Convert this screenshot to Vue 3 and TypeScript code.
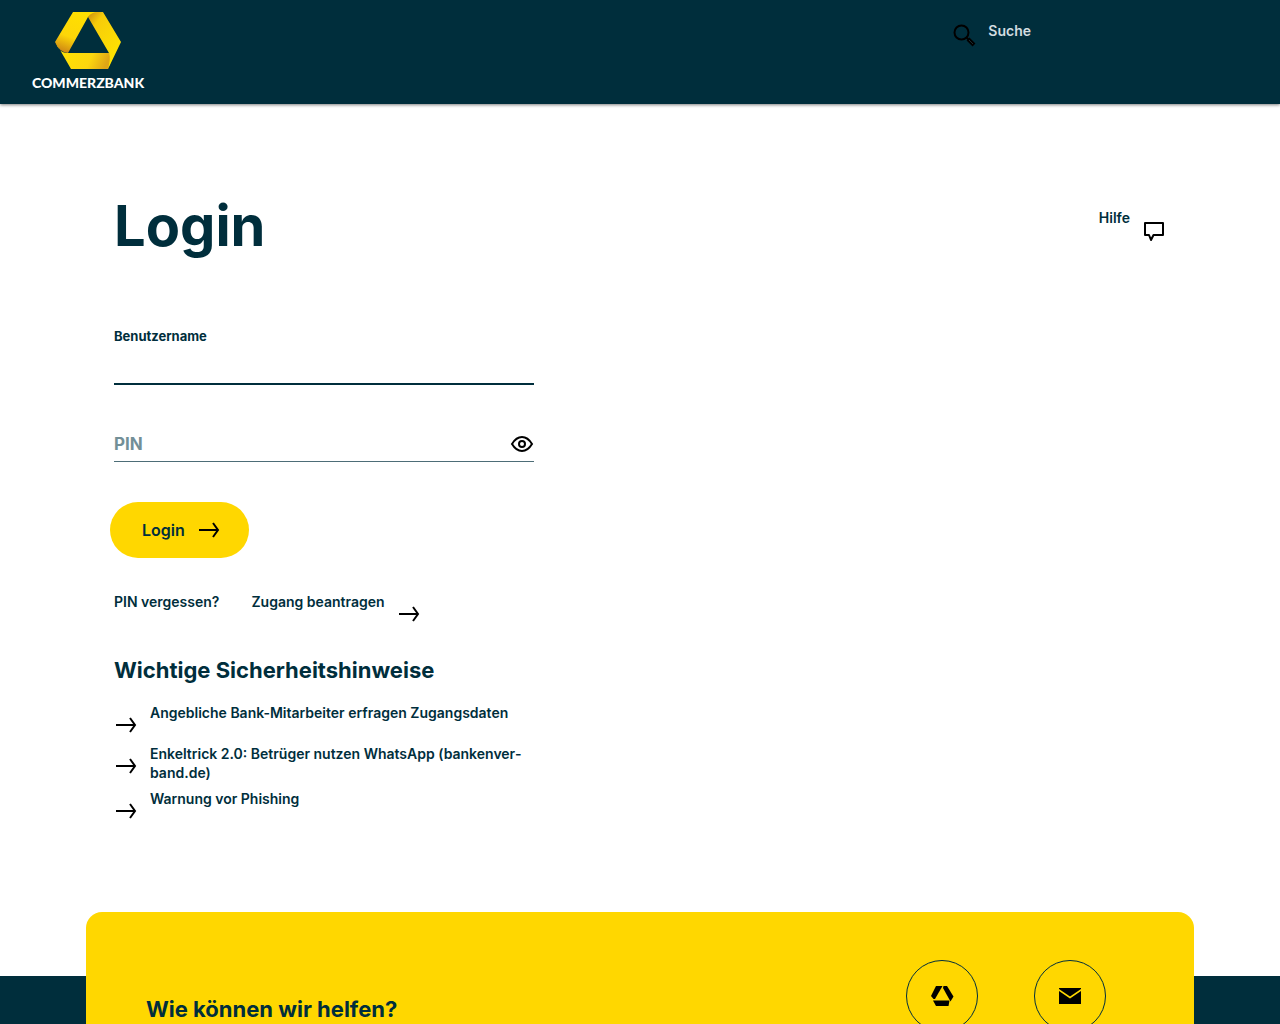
<script setup lang="ts">
import { ref } from 'vue'

const username = ref<string>('')
const pin = ref<string>('')
const pinVisible = ref<boolean>(false)

const hints: string[] = [
  'Angebliche Bank-Mitarbeiter erfragen Zugangsdaten',
  'Enkeltrick 2.0: Betrüger nutzen WhatsApp (bankenver\u00adband.de)',
  'Warnung vor Phishing',
]
</script>

<template>
  <div class="page">
    <header class="header">
      <a class="brand" href="#">
        <svg class="brand-mark" viewBox="0 0 66 57" aria-hidden="true">
          <defs>
            <linearGradient id="band-left" x1="0.7" y1="0" x2="0.3" y2="1">
              <stop offset="0" stop-color="#ffe000" />
              <stop offset="0.65" stop-color="#fdd608" />
              <stop offset="1" stop-color="#d08a14" />
            </linearGradient>
            <linearGradient id="band-right" x1="0" y1="0" x2="0.7" y2="1">
              <stop offset="0" stop-color="#c98a10" />
              <stop offset="0.25" stop-color="#f7cc0a" />
              <stop offset="1" stop-color="#ffe600" />
            </linearGradient>
            <linearGradient id="band-bottom" x1="0" y1="0" x2="1" y2="0.2">
              <stop offset="0" stop-color="#ffe600" />
              <stop offset="0.7" stop-color="#fcd60e" />
              <stop offset="1" stop-color="#e0a616" />
            </linearGradient>
          </defs>
          <path d="M1 31Q4 41 13 41H54L58 44L53 57H16z" fill="url(#band-bottom)" />
          <path d="M38 0H48L66 30L53 57Q56 46 54 41L33 5Q34 0 40 0z" fill="url(#band-right)" />
          <path d="M18 0H44Q36 0 33 5L13 41Q4 40 0 30z" fill="url(#band-left)" />
        </svg>
        <span class="brand-name">COMMERZBANK</span>
      </a>
      <a class="search" href="#">
        <svg class="icon" viewBox="0 0 24 24" aria-hidden="true">
          <circle cx="9.500" cy="9.500" r="7" fill="none" stroke="#000" stroke-width="2" />
          <path d="M14 14l4 4" stroke="#000" stroke-width="2" />
          <path d="M16 16l6 6" stroke="#000" stroke-width="4" />
          <path d="M17 17l4 4" stroke="#1c2b30" stroke-width="1" />
        </svg>
        <span>Suche</span>
      </a>
    </header>

    <main class="main">
      <div class="title-row">
        <h1>Login</h1>
        <a class="help" href="#">
          <span>Hilfe</span>
          <svg class="icon" viewBox="0 0 24 24" fill="none" stroke="#000" stroke-width="2" stroke-linejoin="round" aria-hidden="true">
            <path d="M3 4H21V16H11.500L9 21L7 16H3z" />
          </svg>
        </a>
      </div>

      <div class="column">
        <form @submit.prevent>
          <div class="field field-active">
            <label for="username">Benutzername</label>
            <input id="username" v-model="username" type="text" autocomplete="username" />
          </div>
          <div class="field field-pin">
            <input
              id="pin"
              v-model="pin"
              :type="pinVisible ? 'text' : 'password'"
              placeholder="PIN"
              aria-label="PIN"
              autocomplete="current-password"
            />
            <button class="eye" type="button" aria-label="PIN anzeigen" @click="pinVisible = !pinVisible">
              <svg class="icon" viewBox="0 0 24 24" fill="none" stroke="#000" stroke-width="2" aria-hidden="true">
                <path d="M2 12C5 7 8 5 12 5S19 7 22 12C19 17 16 19 12 19S5 17 2 12z" />
                <circle cx="12" cy="12" r="3" />
              </svg>
            </button>
          </div>
          <button class="submit" type="submit">
            <span>Login</span>
            <svg class="icon" viewBox="0 0 24 24" fill="none" stroke="#000" stroke-width="2" aria-hidden="true">
              <path d="M2 12H21M16 5L21 12L16 19" />
            </svg>
          </button>
        </form>

        <nav class="links">
          <a href="#">PIN vergessen?</a>
          <a class="apply" href="#">
            <span>Zugang beantragen</span>
            <svg class="icon" viewBox="0 0 24 24" fill="none" stroke="#000" stroke-width="2" aria-hidden="true">
              <path d="M2 12H21M16 5L21 12L16 19" />
            </svg>
          </a>
        </nav>

        <h2>Wichtige Sicherheitshinweise</h2>
        <ul class="hints">
          <li v-for="hint in hints" :key="hint">
            <a href="#">
              <svg class="icon" viewBox="0 0 24 24" fill="none" stroke="#000" stroke-width="2" aria-hidden="true">
                <path d="M2 12H21M16 5L21 12L16 19" />
              </svg>
              <span>{{ hint }}</span>
            </a>
          </li>
        </ul>
      </div>
    </main>

    <footer class="footer">
      <section class="contact">
        <h2>Wie können wir helfen?</h2>
        <div class="contact-actions">
          <a href="#" aria-label="Filiale">
            <svg class="icon" viewBox="0 0 24 24" aria-hidden="true">
              <path d="M6 2H12.500L5 15L3.500 15L1 12z" />
              <path d="M13.500 2H17L23.500 12.500L20.500 17.500L13 4z" />
              <path d="M3 16.500H19.500L18.500 22H6z" />
            </svg>
          </a>
          <a href="#" aria-label="E-Mail">
            <svg class="icon" viewBox="0 0 24 24" aria-hidden="true">
              <path d="M1 4H23V5L12 12.500L1 5z" />
              <path d="M1 7L12 14.500L23 7V20H1z" />
            </svg>
          </a>
        </div>
      </section>
    </footer>
  </div>
</template>

<style>
body {
  margin: 0;
  background: #fff;
}
</style>

<style scoped>
.page {
  display: flex;
  flex-direction: column;
  min-height: 100vh;
  color: #002e3c;
  font-family: Inter, "Open Sans", sans-serif;
  font-size: 14px;
  font-weight: 600;
  line-height: 19px;
}

a {
  color: inherit;
  text-decoration: none;
}

h1,
h2 {
  margin: 0;
  font-weight: 700;
}

h2 {
  font-size: 22px;
  line-height: 28px;
}

.icon {
  display: block;
  flex: none;
  width: 24px;
  height: 24px;
}

.header {
  display: flex;
  align-items: flex-start;
  justify-content: space-between;
  box-sizing: border-box;
  min-height: 104px;
  padding: 12px 249px 0 32px;
  background: #002e3c;
  box-shadow: 0 1px 3px rgba(0, 0, 0, 0.5);
}

.brand {
  display: flex;
  flex-direction: column;
  align-items: center;
  color: #fff;
}

.brand-mark {
  width: 66px;
  height: 57px;
}

.brand-name {
  padding-top: 4px;
  font-family: Lato, sans-serif;
  font-size: 14px;
  font-weight: 900;
}

.search {
  display: flex;
  gap: 12px;
  padding-top: 9px;
  color: #d3dde0;
}

.search .icon {
  margin-top: 2px;
}

.main {
  display: flex;
  flex-direction: column;
  padding: 90px 114px 82px;
}

.title-row {
  display: flex;
  align-items: flex-start;
  justify-content: space-between;
}

h1 {
  font-size: 56px;
  line-height: 64px;
}

.help {
  display: flex;
  gap: 12px;
  padding-top: 14px;
}

.help .icon {
  margin-top: 11px;
}

.column {
  width: 100%;
  max-width: 420px;
  padding-top: 68px;
}

.field {
  display: flex;
}

.field input {
  flex: 1;
  min-width: 0;
  padding: 0;
  border: 0;
  outline: 0;
  background: transparent;
  color: inherit;
  font: inherit;
  font-size: 17px;
}

.field-active {
  flex-direction: column;
  border-bottom: 2px solid #002e3c;
}

.field-active label {
  padding-top: 1px;
  font-size: 13px;
  font-weight: 700;
}

.field-active input {
  flex: none;
  height: 37px;
}

.field-pin {
  align-items: center;
  height: 34px;
  margin-top: 42px;
  border-bottom: 1px solid #4d6d77;
}

.field-pin input::placeholder {
  color: #738f97;
  font-weight: 700;
  opacity: 1;
}

.eye {
  padding: 0;
  border: 0;
  background: none;
  cursor: pointer;
}

.submit {
  display: flex;
  align-items: center;
  gap: 12px;
  height: 56px;
  margin: 40px 0 0 -4px;
  padding: 0 28px 0 32px;
  border: 0;
  border-radius: 28px;
  background: #ffd700;
  color: #002e3c;
  font: inherit;
  font-size: 16px;
  cursor: pointer;
}

.links {
  display: flex;
  gap: 32px;
  padding-top: 34px;
}

.apply {
  display: flex;
  gap: 12px;
}

.apply .icon {
  margin-top: 10px;
}

.links + h2 {
  padding-top: 30px;
}

.hints {
  margin: 0;
  padding: 19px 0 0;
  list-style: none;
}

.hints li {
  padding-bottom: 7px;
}

.hints a {
  display: flex;
  align-items: flex-start;
  gap: 12px;
}

.hints .icon {
  margin-top: 10px;
}

.footer {
  flex: 1;
  margin-top: 64px;
  padding: 0 86px;
  background: #002e3c;
}

.contact {
  display: flex;
  justify-content: space-between;
  align-items: center;
  margin-top: -64px;
  padding: 48px 88px 48px 60px;
  border-radius: 16px;
  background: #ffd700;
}

.contact-actions {
  display: flex;
  align-items: flex-start;
  gap: 56px;
  min-height: 98px;
}

.contact-actions a {
  display: flex;
  align-items: center;
  justify-content: center;
  box-sizing: border-box;
  width: 72px;
  height: 72px;
  border: 1px solid #002e3c;
  border-radius: 50%;
}
</style>
